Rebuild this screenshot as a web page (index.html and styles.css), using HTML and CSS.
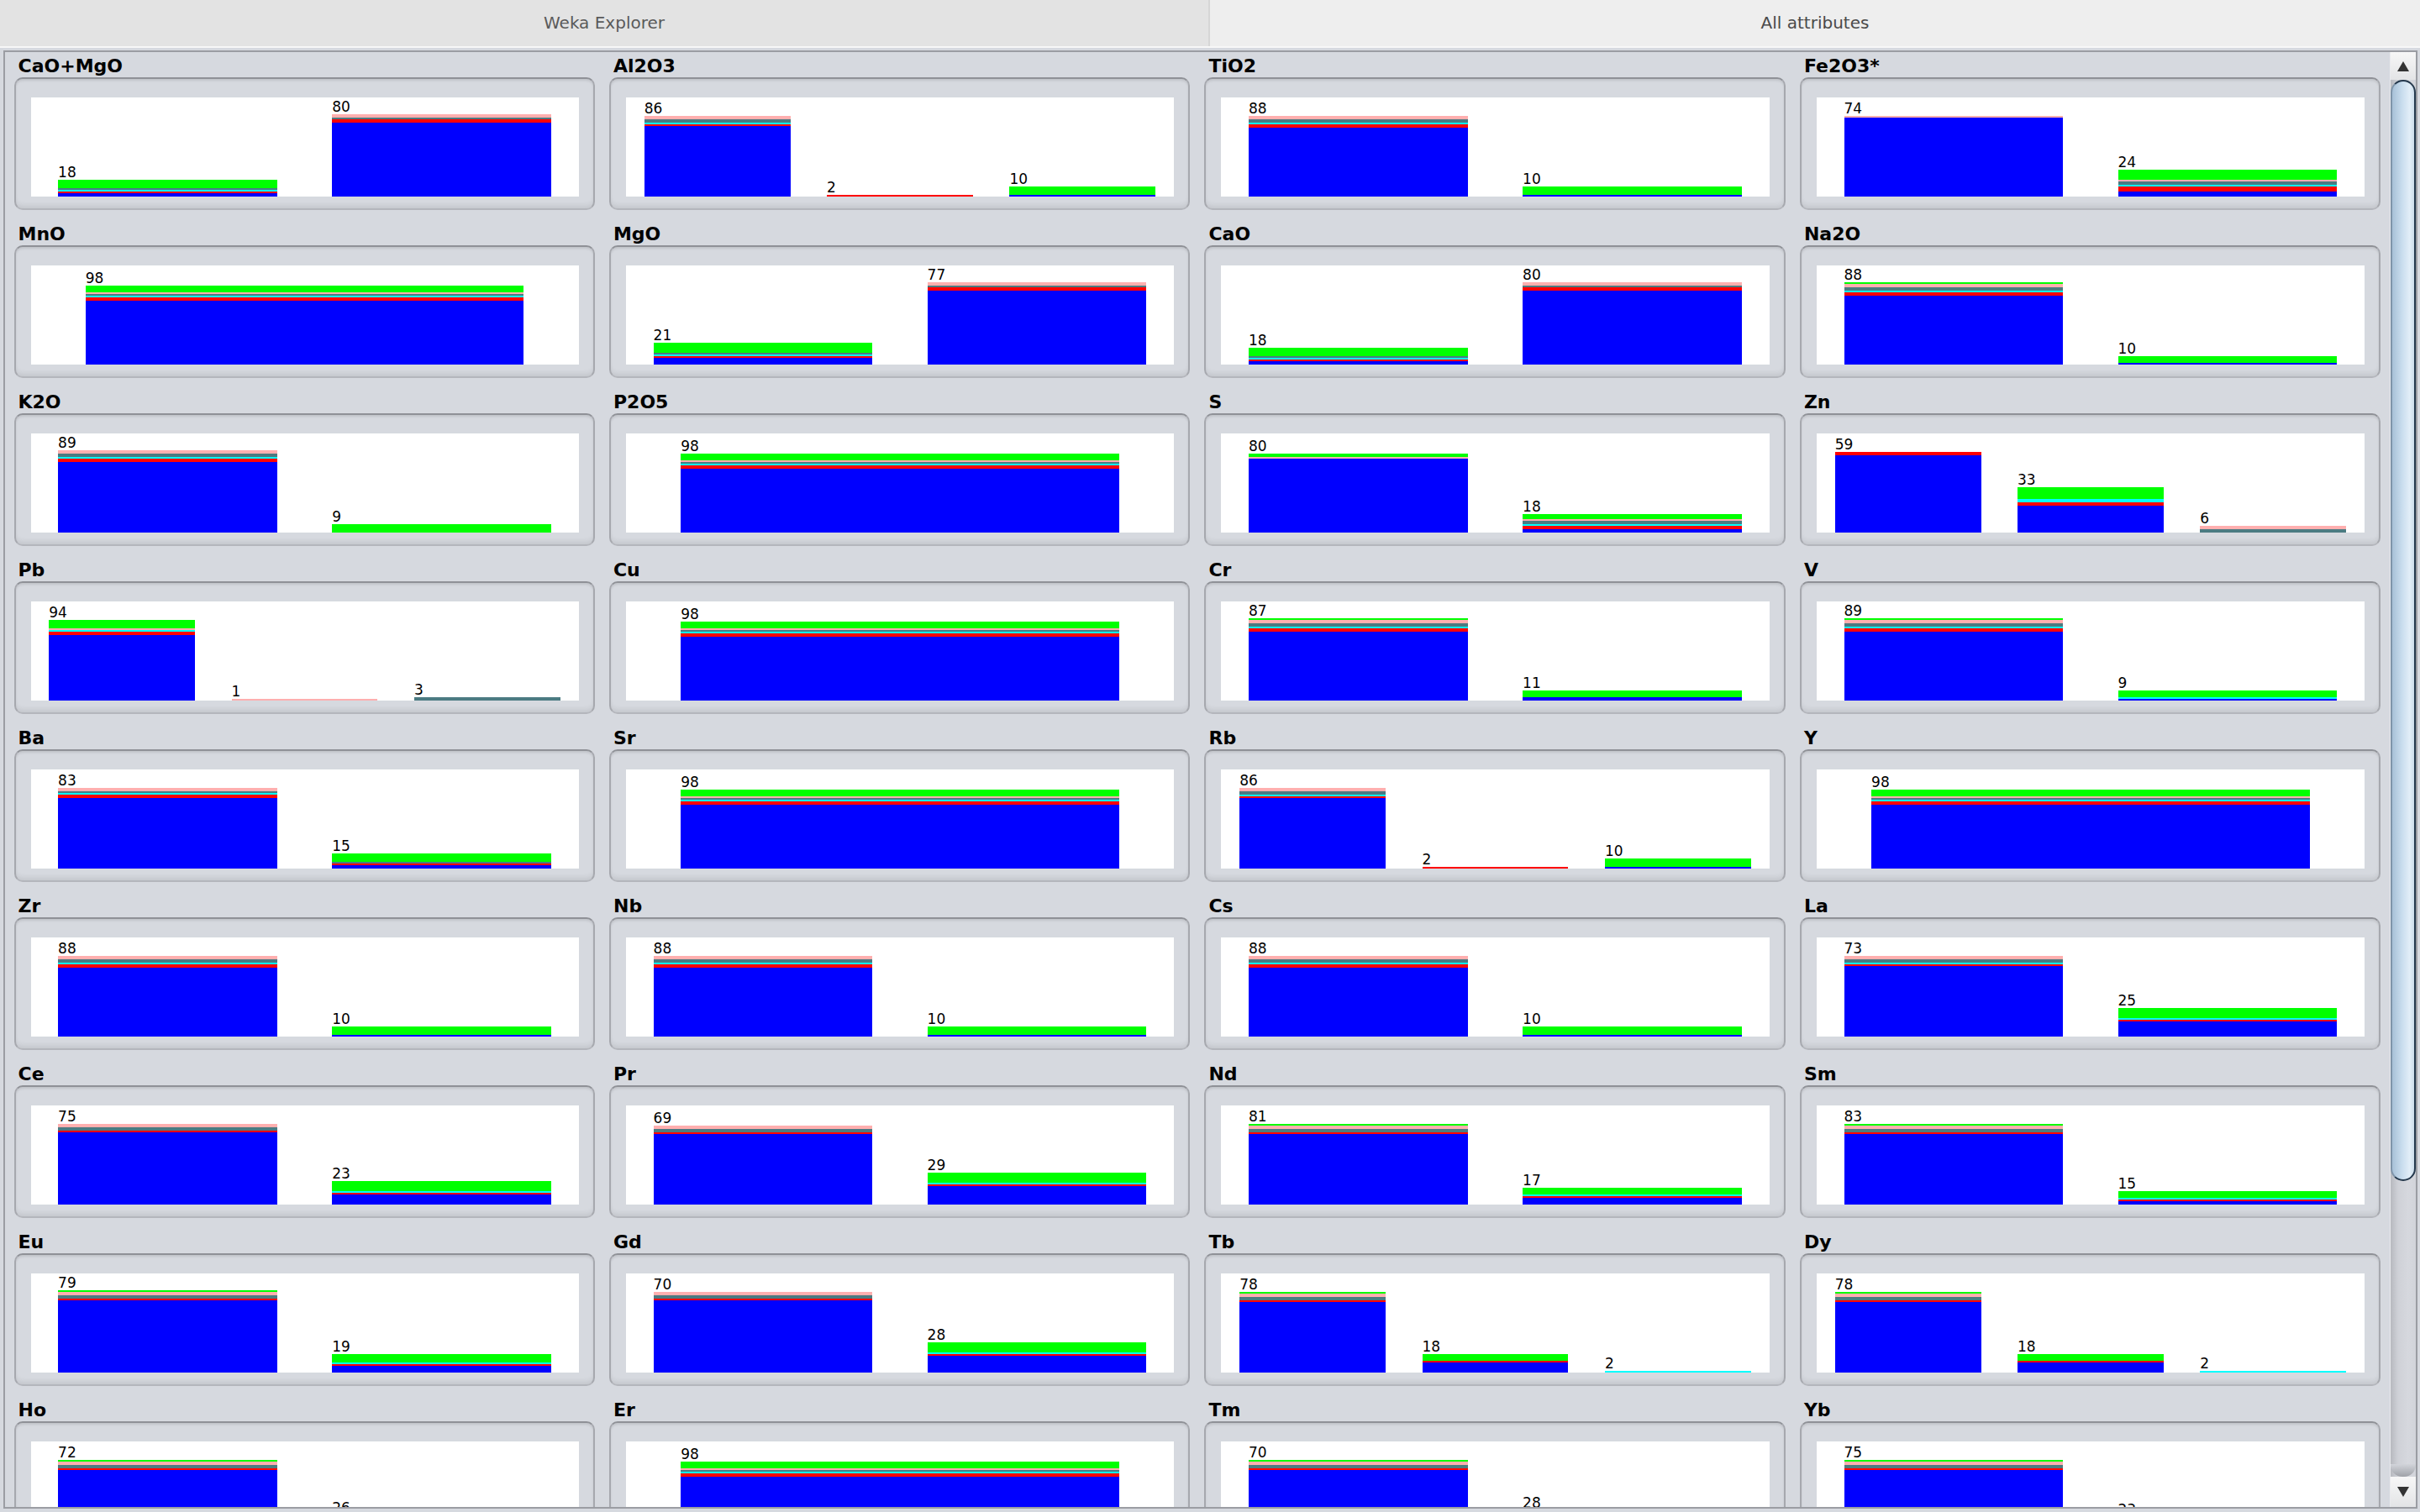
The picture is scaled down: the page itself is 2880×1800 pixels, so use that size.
FILE: index.html
```html
<!DOCTYPE html>
<html lang="en">
<head>
    <meta charset="UTF-8">
    <title>Weka Explorer - All attributes</title>
    <link rel="stylesheet" href="styles.css">
</head>
<body>

<div class="tabs">
    <div class="tab tab-left">Weka Explorer</div>
    <div class="tab tab-right">All attributes</div>
</div>

<div class="viewport">
    <div class="content">
        <div class="grid" id="grid"></div>
    </div>
    <div class="scrollbar">
        <div class="sb-btn sb-up"></div>
        <div class="sb-thumb"></div>
        <div class="sb-track"></div>
        <div class="sb-cap"></div>
        <div class="sb-btn sb-down"></div>
    </div>
</div>

<script>
    // class counts per bin, bottom to top: blue, red, cyan, teal, pink, green (in px)
    const attributes = [
        ['CaO+MgO', [[18, [4,2,2,2,0,10]], [80, [88,4,0,2,4,0]]]],
        ['Al2O3', [[86, [84,2,2,4,4,0]], [2, [0,2,0,0,0,0]], [10, [2,0,0,0,0,10]]]],
        ['TiO2', [[88, [82,4,2,4,4,0]], [10, [2,0,0,0,0,10]]]],
        ['Fe2O3*', [[74, [94,0,0,0,2,0]], [24, [6,6,2,4,2,12]]]],
        ['MnO', [[98, [76,4,2,2,2,8]]]],
        ['MgO', [[21, [8,2,2,2,0,12]], [77, [88,4,0,2,4,0]]]],
        ['CaO', [[18, [4,2,2,2,0,10]], [80, [88,4,0,2,4,0]]]],
        ['Na2O', [[88, [82,4,2,4,4,2]], [10, [2,0,0,0,0,8]]]],
        ['K2O', [[89, [84,4,2,4,4,0]], [9, [0,0,0,0,0,10]]]],
        ['P2O5', [[98, [76,4,2,2,2,8]]]],
        ['S', [[80, [88,0,0,0,2,4]], [18, [4,4,2,4,2,6]]]],
        ['Zn', [[59, [92,4,0,0,0,0]], [33, [32,4,4,0,0,14]], [6, [0,0,0,4,4,0]]]],
        ['Pb', [[94, [78,4,2,0,2,10]], [1, [0,0,0,0,2,0]], [3, [0,0,0,4,0,0]]]],
        ['Cu', [[98, [76,4,2,2,2,8]]]],
        ['Cr', [[87, [82,4,2,4,4,2]], [11, [4,0,0,0,0,8]]]],
        ['V', [[89, [82,4,2,4,4,2]], [9, [2,0,2,0,0,8]]]],
        ['Ba', [[83, [84,4,2,2,4,0]], [15, [4,2,0,2,0,10]]]],
        ['Sr', [[98, [76,4,2,2,2,8]]]],
        ['Rb', [[86, [84,2,2,4,4,0]], [2, [0,2,0,0,0,0]], [10, [2,0,0,0,0,10]]]],
        ['Y', [[98, [76,4,2,2,2,8]]]],
        ['Zr', [[88, [82,4,2,4,4,0]], [10, [2,0,0,0,0,10]]]],
        ['Nb', [[88, [82,4,2,4,4,0]], [10, [2,0,0,0,0,10]]]],
        ['Cs', [[88, [82,4,2,4,4,0]], [10, [2,0,0,0,0,10]]]],
        ['La', [[73, [84,2,2,4,4,0]], [25, [18,2,2,0,0,12]]]],
        ['Ce', [[75, [86,2,0,4,4,0]], [23, [12,2,2,0,0,12]]]],
        ['Pr', [[69, [84,2,0,4,4,0]], [29, [22,2,2,0,0,12]]]],
        ['Nd', [[81, [84,2,0,4,4,2]], [17, [8,2,2,0,0,8]]]],
        ['Sm', [[83, [84,2,0,4,4,2]], [15, [4,2,2,0,0,8]]]],
        ['Eu', [[79, [86,2,0,4,4,2]], [19, [8,2,2,0,0,10]]]],
        ['Gd', [[70, [86,2,0,4,4,0]], [28, [20,2,2,0,0,12]]]],
        ['Tb', [[78, [84,2,0,4,4,2]], [18, [12,2,0,0,0,8]], [2, [0,0,2,0,0,0]]]],
        ['Dy', [[78, [84,2,0,4,4,2]], [18, [12,2,0,0,0,8]], [2, [0,0,2,0,0,0]]]],
        ['Ho', [[72, [84,2,0,4,4,2]], [26, [14,2,2,0,0,12]]]],
        ['Er', [[98, [76,4,2,2,2,8]]]],
        ['Tm', [[70, [84,2,0,4,4,2]], [28, [20,2,2,0,0,12]]]],
        ['Yb', [[75, [84,2,0,4,4,2]], [23, [12,2,2,0,0,12]]]]
    ];

    function el(cls, text) {
        const d = document.createElement('div');
        d.className = cls;
        if (text !== undefined) d.textContent = text;
        return d;
    }

    const grid = document.getElementById('grid');
    attributes.forEach(([name, bins]) => {
        const cell = el('attr');
        const box = el('attr-box');
        const plot = el('plot');
        bins.forEach(([count, segs]) => {
            const bin = el('bin');
            const bar = el('bar');
            segs.forEach((h, i) => {
                if (!h) return;
                const seg = el('seg c' + i);
                seg.style.height = h + 'px';
                bar.prepend(seg);
            });
            bin.appendChild(el('bin-count', count));
            bin.appendChild(bar);
            plot.appendChild(bin);
        });
        box.appendChild(plot);
        cell.appendChild(el('attr-name', name));
        cell.appendChild(box);
        grid.appendChild(cell);
    });
</script>

</body>
</html>
```

FILE: styles.css
```css
html, body {
    margin: 0;
}
body {
    height: 1800px;
    display: flex;
    flex-direction: column;
    overflow: hidden;
    background: #d6d9df;
    font-family: "DejaVu Sans", sans-serif;
    color: #000;
}
/* window tab strip */
.tabs {
    flex: none;
    display: flex;
    height: 55px;
    border-bottom: 2px solid #f7f7f7;
}
.tab {
    line-height: 55px;
    text-align: center;
    font-size: 20px;
    color: #5a5a5a;
}
.tab-left {
    width: 1438px;
    background: #e3e3e3;
    border-right: 2px solid #d6d6d6;
}
.tab-right {
    flex: 1;
    background: #eeeeee;
    color: #4a4a4a;
}
/* scroll pane */
.viewport {
    flex: 1;
    min-height: 0;
    display: flex;
    margin: 3px 3px 4px 4px;
    border: 2px solid #9b9da3;
}
.content {
    flex: 1;
    overflow: hidden;
}
.grid {
    display: grid;
    grid-template-columns: repeat(4, 1fr);
    column-gap: 17.4px;
    row-gap: 16px;
    padding: 4px 11px 0 10.5px;
}
.attr-name {
    font-size: 22px;
    font-weight: bold;
    line-height: 26px;
    padding-left: 5px;
    white-space: nowrap;
}
.attr-box {
    border: 2px solid #a6a8ae;
    border-top-color: #8f9197;
    border-bottom-color: #b4b6bc;
    border-radius: 10px;
    padding: 22px 17px 14px 18px;
    box-shadow: inset 0 3px 3px -1px rgba(0,0,0,0.10), inset 0 -6px 6px -3px rgba(0,0,0,0.09);
}
.plot {
    height: 118px;
    display: flex;
    background: #fff;
}
.bin {
    flex: 1;
    min-width: 0;
    display: flex;
    flex-direction: column;
    justify-content: flex-end;
}
.bin-count, .bar {
    margin: 0 10%;
}
.bin-count {
    font-size: 17px;
    line-height: 17px;
    white-space: nowrap;
}
.bar {
    display: flex;
    flex-direction: column;
}
.c0 { background: #0000ff; }
.c1 { background: #ff0000; }
.c2 { background: #00ffff; }
.c3 { background: #4b7b82; }
.c4 { background: #ffafaf; }
.c5 { background: #00ff00; }
/* aqua style scrollbar */
.scrollbar {
    width: 30px;
    display: flex;
    flex-direction: column;
    border-left: 1px solid #e9eaee;
    background: linear-gradient(to right, #b7b9bf, #cfd1d7 30%, #d6d8de 70%, #d2d4da);
}
.sb-btn {
    flex: none;
    position: relative;
    background: linear-gradient(#f7f7f7, #e3e4e6);
}
.sb-up {
    height: 33px;
}
.sb-down {
    height: 36px;
}
.sb-btn::after {
    content: "";
    position: absolute;
    left: 8px;
    border-left: 7px solid transparent;
    border-right: 7px solid transparent;
}
.sb-up::after {
    top: 11px;
    border-bottom: 12px solid #333;
}
.sb-down::after {
    top: 12px;
    border-top: 12px solid #333;
}
.sb-thumb {
    flex: none;
    height: 1307px;
    border: 2px solid #24384c;
    border-left-color: #7f95aa;
    border-radius: 15px;
    background: linear-gradient(to right, #a7c0d7, #c9ddee 45%, #e2eef8 80%, #cbdcea);
}
.sb-track {
    flex: 1;
}
.sb-cap {
    flex: none;
    height: 15px;
    border-radius: 0 0 14px 14px;
    background: linear-gradient(#d2d4da, #9fa2a8);
}
```
